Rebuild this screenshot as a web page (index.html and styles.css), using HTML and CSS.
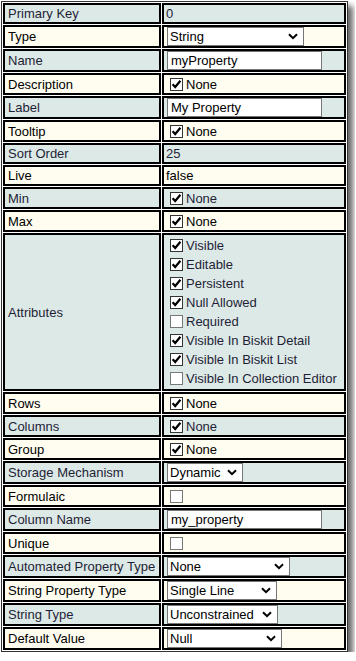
FILE: index.html
```html
<!DOCTYPE html>
<html lang="en">
<head>
    <meta charset="UTF-8">
    <meta name="viewport" content="width=device-width, initial-scale=1.0">
    <title>Property Editor</title>
    <link rel="stylesheet" href="styles.css">
</head>
<body>

<table class="props">
    <tr>
        <td class="key">Primary Key</td>
        <td class="val">0</td>
    </tr>
    <tr>
        <td class="key">Type</td>
        <td class="val ctl">
            <span class="pick" style="width:137px"><select><option>String</option></select><svg class="chev" width="10" height="7" viewBox="0 0 10 7"><path d="M1 1.2l4 4 4-4" fill="none" stroke="#000" stroke-width="2"/></svg></span>
        </td>
    </tr>
    <tr>
        <td class="key">Name</td>
        <td class="val ctl"><input type="text" value="myProperty"></td>
    </tr>
    <tr>
        <td class="key">Description</td>
        <td class="val"><label class="chk"><svg class="box" width="13" height="13" viewBox="0 0 13 13"><rect x="0.5" y="0.5" width="12" height="12" fill="#fff" stroke="#333"/><path d="M2.6 6.2l2.6 2.8 5.2-6.2" fill="none" stroke="#000" stroke-width="2.2"/></svg>None</label></td>
    </tr>
    <tr>
        <td class="key">Label</td>
        <td class="val ctl"><input type="text" value="My Property"></td>
    </tr>
    <tr>
        <td class="key">Tooltip</td>
        <td class="val"><label class="chk"><svg class="box" width="13" height="13" viewBox="0 0 13 13"><rect x="0.5" y="0.5" width="12" height="12" fill="#fff" stroke="#333"/><path d="M2.6 6.2l2.6 2.8 5.2-6.2" fill="none" stroke="#000" stroke-width="2.2"/></svg>None</label></td>
    </tr>
    <tr>
        <td class="key">Sort Order</td>
        <td class="val">25</td>
    </tr>
    <tr>
        <td class="key">Live</td>
        <td class="val">false</td>
    </tr>
    <tr>
        <td class="key">Min</td>
        <td class="val"><label class="chk"><svg class="box" width="13" height="13" viewBox="0 0 13 13"><rect x="0.5" y="0.5" width="12" height="12" fill="#fff" stroke="#333"/><path d="M2.6 6.2l2.6 2.8 5.2-6.2" fill="none" stroke="#000" stroke-width="2.2"/></svg>None</label></td>
    </tr>
    <tr>
        <td class="key">Max</td>
        <td class="val"><label class="chk"><svg class="box" width="13" height="13" viewBox="0 0 13 13"><rect x="0.5" y="0.5" width="12" height="12" fill="#fff" stroke="#333"/><path d="M2.6 6.2l2.6 2.8 5.2-6.2" fill="none" stroke="#000" stroke-width="2.2"/></svg>None</label></td>
    </tr>
    <tr>
        <td class="key">Attributes</td>
        <td class="val attrs">
            <label class="chk"><svg class="box" width="13" height="13" viewBox="0 0 13 13"><rect x="0.5" y="0.5" width="12" height="12" fill="#fff" stroke="#333"/><path d="M2.6 6.2l2.6 2.8 5.2-6.2" fill="none" stroke="#000" stroke-width="2.2"/></svg>Visible</label>
            <label class="chk"><svg class="box" width="13" height="13" viewBox="0 0 13 13"><rect x="0.5" y="0.5" width="12" height="12" fill="#fff" stroke="#333"/><path d="M2.6 6.2l2.6 2.8 5.2-6.2" fill="none" stroke="#000" stroke-width="2.2"/></svg>Editable</label>
            <label class="chk"><svg class="box" width="13" height="13" viewBox="0 0 13 13"><rect x="0.5" y="0.5" width="12" height="12" fill="#fff" stroke="#333"/><path d="M2.6 6.2l2.6 2.8 5.2-6.2" fill="none" stroke="#000" stroke-width="2.2"/></svg>Persistent</label>
            <label class="chk"><svg class="box" width="13" height="13" viewBox="0 0 13 13"><rect x="0.5" y="0.5" width="12" height="12" fill="#fff" stroke="#333"/><path d="M2.6 6.2l2.6 2.8 5.2-6.2" fill="none" stroke="#000" stroke-width="2.2"/></svg>Null Allowed</label>
            <label class="chk"><svg class="box" width="13" height="13" viewBox="0 0 13 13"><rect x="0.5" y="0.5" width="12" height="12" fill="#fff" stroke="#777"/></svg>Required</label>
            <label class="chk"><svg class="box" width="13" height="13" viewBox="0 0 13 13"><rect x="0.5" y="0.5" width="12" height="12" fill="#fff" stroke="#333"/><path d="M2.6 6.2l2.6 2.8 5.2-6.2" fill="none" stroke="#000" stroke-width="2.2"/></svg>Visible In Biskit Detail</label>
            <label class="chk"><svg class="box" width="13" height="13" viewBox="0 0 13 13"><rect x="0.5" y="0.5" width="12" height="12" fill="#fff" stroke="#333"/><path d="M2.6 6.2l2.6 2.8 5.2-6.2" fill="none" stroke="#000" stroke-width="2.2"/></svg>Visible In Biskit List</label>
            <label class="chk"><svg class="box" width="13" height="13" viewBox="0 0 13 13"><rect x="0.5" y="0.5" width="12" height="12" fill="#fff" stroke="#777"/></svg>Visible In Collection Editor</label>
        </td>
    </tr>
    <tr>
        <td class="key">Rows</td>
        <td class="val"><label class="chk"><svg class="box" width="13" height="13" viewBox="0 0 13 13"><rect x="0.5" y="0.5" width="12" height="12" fill="#fff" stroke="#333"/><path d="M2.6 6.2l2.6 2.8 5.2-6.2" fill="none" stroke="#000" stroke-width="2.2"/></svg>None</label></td>
    </tr>
    <tr>
        <td class="key">Columns</td>
        <td class="val"><label class="chk"><svg class="box" width="13" height="13" viewBox="0 0 13 13"><rect x="0.5" y="0.5" width="12" height="12" fill="#fff" stroke="#333"/><path d="M2.6 6.2l2.6 2.8 5.2-6.2" fill="none" stroke="#000" stroke-width="2.2"/></svg>None</label></td>
    </tr>
    <tr>
        <td class="key">Group</td>
        <td class="val"><label class="chk"><svg class="box" width="13" height="13" viewBox="0 0 13 13"><rect x="0.5" y="0.5" width="12" height="12" fill="#fff" stroke="#333"/><path d="M2.6 6.2l2.6 2.8 5.2-6.2" fill="none" stroke="#000" stroke-width="2.2"/></svg>None</label></td>
    </tr>
    <tr>
        <td class="key">Storage Mechanism</td>
        <td class="val ctl">
            <span class="pick" style="width:76px"><select><option>Dynamic</option></select><svg class="chev" width="10" height="7" viewBox="0 0 10 7"><path d="M1 1.2l4 4 4-4" fill="none" stroke="#000" stroke-width="2"/></svg></span>
        </td>
    </tr>
    <tr>
        <td class="key">Formulaic</td>
        <td class="val"><label class="chk"><svg class="box" width="13" height="13" viewBox="0 0 13 13"><rect x="0.5" y="0.5" width="12" height="12" fill="#fff" stroke="#777"/></svg></label></td>
    </tr>
    <tr>
        <td class="key">Column Name</td>
        <td class="val ctl"><input type="text" value="my_property"></td>
    </tr>
    <tr>
        <td class="key">Unique</td>
        <td class="val"><label class="chk"><svg class="box" width="13" height="13" viewBox="0 0 13 13"><rect x="0.5" y="0.5" width="12" height="12" fill="#fff" stroke="#777"/></svg></label></td>
    </tr>
    <tr>
        <td class="key">Automated Property Type</td>
        <td class="val ctl">
            <span class="pick" style="width:123px"><select><option>None</option></select><svg class="chev" width="10" height="7" viewBox="0 0 10 7"><path d="M1 1.2l4 4 4-4" fill="none" stroke="#000" stroke-width="2"/></svg></span>
        </td>
    </tr>
    <tr>
        <td class="key">String Property Type</td>
        <td class="val ctl">
            <span class="pick" style="width:110px"><select><option>Single Line</option></select><svg class="chev" width="10" height="7" viewBox="0 0 10 7"><path d="M1 1.2l4 4 4-4" fill="none" stroke="#000" stroke-width="2"/></svg></span>
        </td>
    </tr>
    <tr>
        <td class="key">String Type</td>
        <td class="val ctl">
            <span class="pick" style="width:111px"><select><option>Unconstrained</option></select><svg class="chev" width="10" height="7" viewBox="0 0 10 7"><path d="M1 1.2l4 4 4-4" fill="none" stroke="#000" stroke-width="2"/></svg></span>
        </td>
    </tr>
    <tr>
        <td class="key">Default Value</td>
        <td class="val ctl">
            <span class="pick" style="width:115px"><select><option>Null</option></select><svg class="chev" width="10" height="7" viewBox="0 0 10 7"><path d="M1 1.2l4 4 4-4" fill="none" stroke="#000" stroke-width="2"/></svg></span>
        </td>
    </tr>
</table>

</body>
</html>
```

FILE: styles.css
```css
body {
    font-family: "Liberation Sans", Arial, sans-serif;
    font-size: 13px;
    margin: 1px;
    background: #fff;
}
.props {
    width: 347px;
    border: 1px solid #333;
    border-spacing: 1px;
    background: #fff;
    box-shadow: 5px 5px 6px #666;
}
.props td {
    border: 2px solid #000;
    padding: 1px 2px;
    line-height: 15px;
    vertical-align: middle;
}
.props tr:nth-child(odd) td {
    background-color: #dde9e7;
    color: #1e1e36;
}
.props tr:nth-child(even) td {
    background-color: #fffdf0;
    color: #000;
}
.props td.key {
    width: 149px;
    padding-left: 3px;
    white-space: nowrap;
}
.props td.ctl {
    padding-top: 0;
    padding-bottom: 0;
}
.props input[type="text"] {
    display: block;
    width: 155px;
    height: 19px;
    box-sizing: border-box;
    margin: 0 0 0 1px;
    padding: 0 3px;
    border: 1px solid #767676;
    font: 13px "Liberation Sans", Arial, sans-serif;
    color: #000;
    background: #fff;
}
.pick {
    position: relative;
    display: block;
    margin-left: 1px;
    height: 19px;
}
.pick select {
    appearance: none;
    -webkit-appearance: none;
    width: 100%;
    height: 19px;
    box-sizing: border-box;
    margin: 0;
    padding: 0 2px;
    border: 1px solid #767676;
    border-radius: 0;
    background: #fff;
    font: 13px "Liberation Sans", Arial, sans-serif;
    color: #000;
}
.pick .chev {
    position: absolute;
    right: 6px;
    top: 6px;
    pointer-events: none;
}
.chk {
    display: flex;
    align-items: center;
    height: 16px;
}
.chk .box {
    flex: none;
    margin: 0 3px 0 4px;
}
.attrs {
    padding-top: 1px;
    padding-bottom: 2px;
}
.attrs .chk {
    height: 19px;
    white-space: nowrap;
}
```
